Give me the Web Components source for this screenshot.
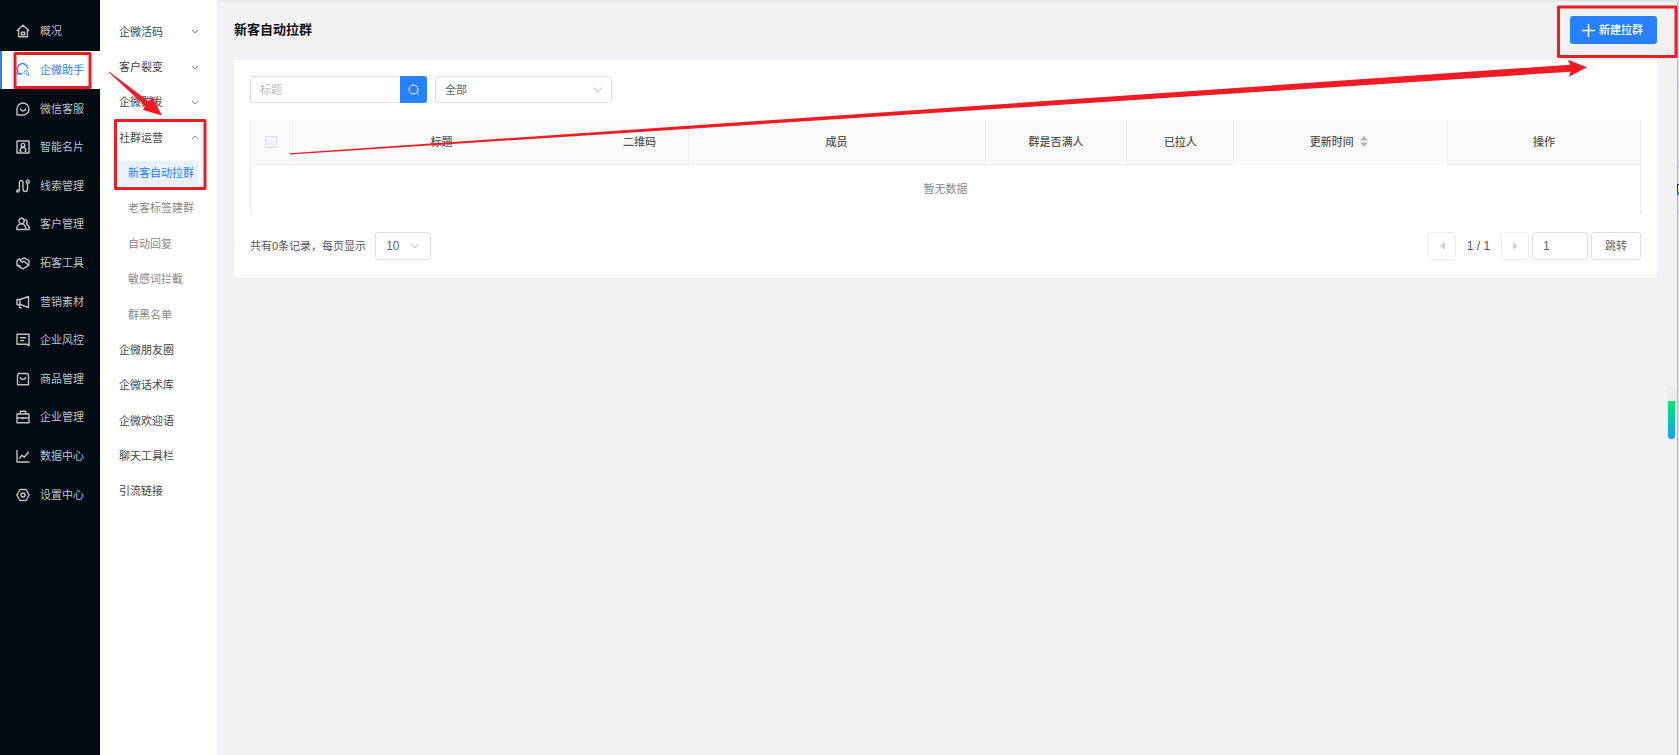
<!DOCTYPE html>
<html lang="zh-CN">
<head>
<meta charset="utf-8">
<title>新客自动拉群</title>
<style>
  html, body {
    margin: 0;
    min-height: 100vh;
  }

  body {
    font: 11px/16px "Liberation Sans", "Noto Sans CJK SC", sans-serif;
    color: #555;
    background: #f2f2f5;
  }
</style>
</head>
<body>
<app-shell>
  <side-nav slot="nav">
    <side-item icon="home">概况</side-item>
    <side-item icon="chat" active>企微助手</side-item>
    <side-item icon="smile">微信客服</side-item>
    <side-item icon="card">智能名片</side-item>
    <side-item icon="route">线索管理</side-item>
    <side-item icon="users">客户管理</side-item>
    <side-item icon="hands">拓客工具</side-item>
    <side-item icon="horn">营销素材</side-item>
    <side-item icon="note">企业风控</side-item>
    <side-item icon="bag">商品管理</side-item>
    <side-item icon="case">企业管理</side-item>
    <side-item icon="chart">数据中心</side-item>
    <side-item icon="gear">设置中心</side-item>
  </side-nav>
  <sub-nav slot="menu">
    <sub-item arrow="down">企微活码</sub-item>
    <sub-item arrow="down">客户裂变</sub-item>
    <sub-item arrow="down">企微群发</sub-item>
    <sub-item arrow="up">社群运营</sub-item>
    <sub-item child active>新客自动拉群</sub-item>
    <sub-item child>老客标签建群</sub-item>
    <sub-item child>自动回复</sub-item>
    <sub-item child>敏感词拦截</sub-item>
    <sub-item child>群黑名单</sub-item>
    <sub-item>企微朋友圈</sub-item>
    <sub-item>企微话术库</sub-item>
    <sub-item>企微欢迎语</sub-item>
    <sub-item>聊天工具栏</sub-item>
    <sub-item>引流链接</sub-item>
  </sub-nav>
  <page-header>新客自动拉群</page-header>
  <page-card>
    <filter-bar></filter-bar>
    <group-table></group-table>
    <page-bar></page-bar>
  </page-card>
</app-shell>
<scroll-pill></scroll-pill>
<guide-marks></guide-marks>

<script>
// pinta la plantilla dentro del shadow root
class BaseElement extends HTMLElement {
  constructor() {
    super()
    this.attachShadow({ mode: 'open' })
  }

  connectedCallback() {
    this.shadowRoot.innerHTML = `
      <style>
        :host { display: block; box-sizing: border-box; }
        * { box-sizing: border-box; }
        svg { display: block; fill: none; stroke: currentColor; }
      </style>
      ${this.render()}`
  }
}

class AppShell extends BaseElement {
  render() {
    return `
<style>
  :host {
    display: flex;
    min-height: 100vh;
    box-shadow: inset 0 2px 1px #e6e7e9, inset -1px 0 #e6e6e8, inset -2px 0 #b4b5ba;
  }
  main { flex: 1; min-width: 0; padding: 16px 22px 16px 17px; }
</style>
<slot name="nav"></slot>
<slot name="menu"></slot>
<main><slot></slot></main>`
  }
}

class SideNav extends BaseElement {
  render() {
    return `
<style>
  :host { width: 100px; flex: none; background: #010b14; padding-top: 12px; }
  nav { display: grid; grid-auto-rows: 1fr; height: 502px; }
</style>
<nav><slot></slot></nav>`
  }
}

const icons = {
  home: '<path d="M.8 6.8 7 1.2l6.2 5.6M2.6 5.5v7.3h8.8V5.5M5.3 8.3h3.4v2.4H5.3z"/>',
  chat: '<path d="M3.6 10.8H1.4l.7-2.2A5.2 5.2 0 1 1 11.7 5.500M3.600 10.800h2.800"/><path stroke-width="1" d="M10 7.200l2.200 2.200L10 11.600 7.800 9.400zM12.600 11.300l.8.8-.8.8-.8-.8z"/>',
  smile: '<path d="M1 13V7a6 6 0 1 1 6 6zM4.3 6.3C5 9.7 9 9.7 9.7 6.3"/>',
  card: '<path d="M1 1h12v12H1z"/><circle cx="7" cy="5.2" r="1.8"/><path d="M4 11.5c.1-5.300 5.900-5.300 6 0M4 11.200h1.500m3 0H10"/>',
  route: '<path d="M2.500 12.200c.6-.3.9-.8.9-1.500V3.600c0-3 3.600-3 3.600 0v6.200c0 3.800 4.500 3.800 4.500 0V4.500"/><circle cx="11.700" cy="2.800" r="1.500"/><circle cx="1.800" cy="12" r="1.100"/>',
  users: '<circle cx="5.500" cy="3.900" r="2.700"/><path d="M.8 12.500c-.6-7.500 9.600-7.500 9 0zM8.800 2.800a2.200 2.200 0 0 1 1.200 4.100M10.700 7.400c1.900.7 2.700 2.300 2.500 5.100H9.800"/>',
  hands: '<path d="M4 2.200 1 4.500v4.800l5.800 3.500 6.200-3.600V4.500L8.200 1.800 4 4.200l2.200 2 2-1 3.700 3.600M1 8.500l4 2.200"/>',
  horn: '<path d="M1 4.500h3l8.500-3v11L4 9.500H1zM4 4.500v5M3 9.700l.7 3h2"/>',
  note: '<path d="M1 1.200h12v11.500l-2.200-1.500H1zM4 4.800h6M4 7.600h4"/>',
  bag: '<path d="M2.300 1.500h9.400l.8 2.200v9.100h-11V3.700zM4.200 5c.9 3.200 4.700 3.200 5.600 0"/>',
  case: '<path d="M1 4h12v8.700H1zM4.300 4V1.300h5.400V4M1 8h12M7 7v2.200"/>',
  chart: '<path d="M1 1v12h12.500M3.200 9.800l2.700-3.500 2.300 2 4.600-5.500"/>',
  gear: '<path d="M4 1.500h6L13.200 7 10 12.500H4L.8 7z"/><circle cx="7" cy="7" r="2"/>'
}

class SideItem extends BaseElement {
  render() {
    return `
<style>
  :host { color: #bfc3c6; }
  :host([active]) { color: #2781ff; background: #fff; border-left: 2px solid #2781ff; }
  a {
    display: flex;
    align-items: center;
    gap: 10px;
    height: 100%;
    padding-left: 16px;
    color: inherit;
    text-decoration: none;
  }
  :host([active]) a { padding-left: 14px; }
  svg { stroke-width: 1.4; stroke-linejoin: round; }
</style>
<a href="#">
  <svg width="14" height="14" viewBox="0 0 14 14" aria-hidden="true">${icons[this.getAttribute('icon')]}</svg>
  <slot></slot>
</a>`
  }
}

class SubNav extends BaseElement {
  render() {
    return `
<style>
  :host { width: 117px; flex: none; background: #fff; padding: 14px 18px 0 19px; }
  nav { display: grid; grid-auto-rows: 1fr; height: 495px; }
</style>
<nav><slot></slot></nav>`
  }
}

class SubItem extends BaseElement {
  render() {
    const arrow = this.getAttribute('arrow')
    const path = arrow === 'up' ? 'M1 5l3-3 3 3' : 'M1 2l3 3 3-3'

    return `
<style>
  :host { display: flex; align-items: center; color: #444; }
  :host([child]) { color: #888; }
  :host([active]) { color: #2781ff; }
  a {
    display: flex;
    flex: 1;
    align-items: center;
    justify-content: space-between;
    height: 25px;
    color: inherit;
    text-decoration: none;
    white-space: nowrap;
  }
  :host([child]) a { padding-left: 9px; }
  :host([active]) a { background: #e9f1ff; border-radius: 2px; }
  svg { color: #888; }
</style>
<a href="#"><slot></slot>${arrow ? `<svg width="8" height="7" viewBox="0 0 8 7" aria-hidden="true"><path d="${path}"/></svg>` : ''}</a>`
  }
}

class PageHeader extends BaseElement {
  render() {
    return `
<style>
  :host { display: flex; align-items: center; justify-content: space-between; margin-bottom: 16px; }
  h1 { margin: 0; font-size: 13px; line-height: 20px; color: #111; }
  button {
    display: flex;
    align-items: center;
    justify-content: center;
    gap: 4px;
    width: 87px;
    height: 28px;
    padding: 0 2px 0 0;
    border: 0;
    border-radius: 3px;
    background: #2781ff;
    color: #fff;
    font: inherit;
    font-weight: 500;
  }
</style>
<h1><slot></slot></h1>
<button type="button">
  <svg width="13" height="13" viewBox="0 0 13 13" stroke-width="1.5" aria-hidden="true"><path d="M6.5 0v13M0 6.5h13"/></svg>
  新建拉群
</button>`
  }
}

class PageCard extends BaseElement {
  render() {
    return `
<style>
  :host { background: #fff; border-radius: 3px; padding: 16px 16px 18px; box-shadow: 0 1px 2px #e9eaec; }
</style>
<slot></slot>`
  }
}

class FilterBar extends BaseElement {
  render() {
    return `
<style>
  :host { display: flex; gap: 8px; margin-bottom: 17px; }
  form { display: flex; }
  input, select {
    height: 27px;
    padding: 0 9px;
    border: 1px solid #dcdfe6;
    border-radius: 3px;
    background: #fff;
    font: inherit;
    color: #606266;
    appearance: none;
  }
  input { width: 150px; border-right: 0; border-radius: 3px 0 0 3px; }
  input::placeholder { color: #bbb; }
  button {
    display: grid;
    place-items: center;
    width: 27px;
    height: 27px;
    padding: 0;
    border: 0;
    border-radius: 0 3px 3px 0;
    background: #2781ff;
    color: #fff;
  }
  label { display: grid; align-items: center; }
  label > * { grid-area: 1 / 1; }
  select { width: 177px; }
  label svg { justify-self: end; margin-right: 9px; color: #bbb; pointer-events: none; }
</style>
<form>
  <input type="text" placeholder="标题" aria-label="标题">
  <button type="button" aria-label="搜索">
    <svg width="12" height="12" viewBox="0 0 12 12" aria-hidden="true"><circle cx="5.5" cy="5.5" r="4.5"/><path d="M8.8 8.8 11 11"/></svg>
  </button>
</form>
<label>
  <select aria-label="状态"><option>全部</option></select>
  <svg width="10" height="8" viewBox="0 0 10 8" aria-hidden="true"><path d="M1 1.5l4 4.5 4-4.5"/></svg>
</label>`
  }
}

class GroupTable extends BaseElement {
  render() {
    return `
<style>
  table {
    width: 100%;
    table-layout: fixed;
    border-collapse: separate;
    border-spacing: 0;
    border: solid #ebeef8;
    border-width: 0 1px;
  }
  th {
    height: 45px;
    padding: 0 0 1px;
    background: #fafafa;
    border: solid #ebeef8;
    border-width: 0 1px 1px 0;
    font-weight: 500;
    color: #555;
  }
  th.open { border-right-color: #fafafa; }
  th.sort { border-bottom-color: #fafafa; }
  th:last-child { border-right: 0; }
  td { height: 49px; padding: 0 0 1px; text-align: center; color: #888; }
  input {
    display: block;
    width: 12px;
    height: 12px;
    margin: 0 auto;
    appearance: none;
    background: #edf2fc;
    border: 1px solid #dcdfe6;
    border-radius: 1px;
  }
  .sorter { display: flex; align-items: center; justify-content: center; gap: 6px; padding-right: 4px; }
  .sorter svg { fill: #b5b5b5; stroke: none; }
</style>
<table>
  <colgroup>
    <col style="width: 3%"><col style="width: 21.5%"><col style="width: 7%"><col style="width: 21.4%">
    <col style="width: 10.2%"><col style="width: 7.7%"><col style="width: 15.4%"><col>
  </colgroup>
  <thead>
    <tr>
      <th><input type="checkbox" aria-label="全选"></th>
      <th class="open">标题</th>
      <th>二维码</th>
      <th>成员</th>
      <th>群是否满人</th>
      <th>已拉人</th>
      <th class="sort"><span class="sorter">更新时间<svg width="8" height="11" viewBox="0 0 8 11" aria-hidden="true"><path d="M4 0l4 4.5H0zM4 11l4-4.5H0z"/></svg></span></th>
      <th>操作</th>
    </tr>
  </thead>
  <tbody>
    <tr><td colspan="8">暂无数据</td></tr>
  </tbody>
</table>`
  }
}

class PageBar extends BaseElement {
  render() {
    return `
<style>
  :host { display: flex; justify-content: space-between; margin-top: 18px; }
  div, label { display: flex; align-items: center; }
  .size { gap: 9px; }
  .jump { gap: 3px; }
  .pick { display: grid; align-items: center; }
  .pick > * { grid-area: 1 / 1; }
  .pick svg { justify-self: end; margin-right: 11px; color: #bbb; pointer-events: none; }
  select, input, button {
    height: 28px;
    padding: 0 10px;
    border: 1px solid #dcdfe6;
    border-radius: 3px;
    background: #fff;
    font: inherit;
    color: #606266;
    appearance: none;
  }
  select, input, .total { font-size: 12px; }
  select, input { width: 56px; }
  button { width: 50px; padding: 0; }
  button:disabled { display: grid; place-items: center; width: 28px; border-color: #ebeef5; color: #d0d3d9; }
  button svg { fill: currentColor; stroke: none; }
  .total { width: 39px; text-align: center; }
</style>
<div class="size">
  <label for="size">共有0条记录，每页显示</label>
  <span class="pick">
    <select id="size"><option>10</option></select>
    <svg width="10" height="8" viewBox="0 0 10 8" aria-hidden="true"><path d="M1 1.5l4 4.5 4-4.5"/></svg>
  </span>
</div>
<div class="jump">
  <button type="button" disabled aria-label="上一页"><svg width="5" height="8" viewBox="0 0 5 8"><path d="M5 0v8L0 4z"/></svg></button>
  <span class="total">1 / 1</span>
  <button type="button" disabled aria-label="下一页"><svg width="5" height="8" viewBox="0 0 5 8"><path d="M0 0v8l5-4z"/></svg></button>
  <input type="text" value="1" aria-label="页码">
  <button type="button">跳转</button>
</div>`
  }
}

// indicador flotante del borde derecho
class ScrollPill extends BaseElement {
  render() {
    return `
<style>
  :host {
    position: absolute;
    top: 387px;
    right: 4px;
    width: 7px;
    height: 52px;
    border-radius: 4px;
    background: linear-gradient(#ececec 14px, #00e676 14px, #08c8a0 32px, #1e96ff);
    box-shadow: 0 0 3px #e4e4e4;
  }
</style>`
  }
}

// recuadros y flechas que se pintan por encima de la pantalla
class GuideMarks extends BaseElement {
  render() {
    return `
<style>
  :host { position: absolute; top: 0; left: 0; pointer-events: none; }
  g { fill: none; stroke: #ee1c24; stroke-width: 3; stroke-linejoin: round; }
  .arrow { fill: #ee1c24; stroke: none; }
</style>
<svg width="1679" height="270" viewBox="0 0 1679 270" aria-hidden="true">
  <g>
    <rect x="15" y="53.5" width="75" height="34"/>
    <rect x="115.5" y="120.5" width="89.5" height="68"/>
    <rect x="1558.5" y="7" width="117.5" height="49.5"/>
  </g>
  <path class="arrow" d="M109 71.5l40.5 30.5 2.5-6 10 19.500-19-5.500 2-4-36-33.500z"/>
  <path class="arrow" d="M290 153.300L1570 64.800l-2-5 19 7.500-18 9.500 1.500-5L290 154.600z"/>
  <path d="M1677 86.500h2M1677 167.500h2M1677 212.500h2" stroke="#b4b5ba"/>
  <path d="M1677 184.500h2M1677.500 184v8" stroke="#26365c"/>
  <path d="M1677 193.500h2" stroke="#2f7fc1" stroke-width="3"/>
</svg>`
  }
}

customElements.define('app-shell', AppShell)
customElements.define('side-nav', SideNav)
customElements.define('side-item', SideItem)
customElements.define('sub-nav', SubNav)
customElements.define('sub-item', SubItem)
customElements.define('page-header', PageHeader)
customElements.define('page-card', PageCard)
customElements.define('filter-bar', FilterBar)
customElements.define('group-table', GroupTable)
customElements.define('page-bar', PageBar)
customElements.define('scroll-pill', ScrollPill)
customElements.define('guide-marks', GuideMarks)
</script>
</body>
</html>
